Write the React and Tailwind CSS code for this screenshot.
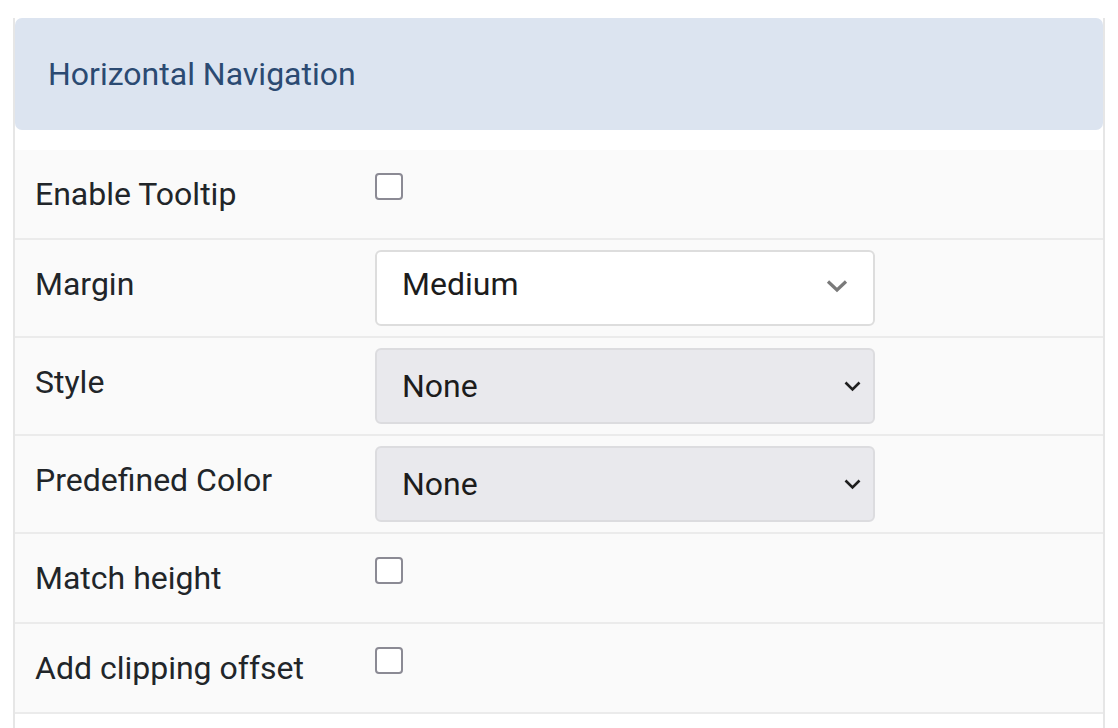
import React from 'react'

function Checkbox() {
    return <div className="mt-[23px] w-[28px] h-[27px] rounded-[4px] border-2 border-[#8b8a94] bg-white"></div>
}

function Chevron({ thick }) {
    if (thick) {
        return (
            <svg width="22" height="14" viewBox="0 0 22 14" className="mr-[25px] mb-[4px]">
                <path d="M2 2.5 L11 11 L20 2.5" fill="none" stroke="#7a7a7a" strokeWidth="3.2" />
            </svg>
        )
    }
    return (
        <svg width="17" height="11" viewBox="0 0 17 11" className="mr-[12px]">
            <path d="M1.5 1.5 L8.5 8.5 L15.5 1.5" fill="none" stroke="#1f1f1f" strokeWidth="2.6" />
        </svg>
    )
}

function Select({ value, plain }) {
    return (
        <div className={"my-[10px] w-[500px] h-[76px] rounded-[6px] border-2 flex items-center justify-between pl-[25px] " + (plain ? "bg-white border-[#dddddd]" : "bg-[#e9e9ed] border-[#dcdcdf]")}>
            <span className={"text-[32px] leading-none text-[#1c1c1c] " + (plain ? "pb-[8px]" : "")}>{value}</span>
            <Chevron thick={plain} />
        </div>
    )
}

function Row({ label, children, h }) {
    return (
        <div className={"flex pl-[20px] bg-[#fafafa] border-b-2 border-[#ebebeb] " + h}>
            <div className="w-[340px] pt-[22px] text-[32px] leading-[45px] text-[#212529]">{label}</div>
            <div>{children}</div>
        </div>
    )
}

export default function App() {
    return (
        <div className="bg-white h-[728px] overflow-hidden" style={{ fontFamily: 'Roboto, "Noto Sans", sans-serif' }}>
            <div className="ml-[13px] w-[1092px] h-[728px] border-x-2 border-[#e6e6e6]">
                <div className="mt-[18px] h-[112px] rounded-[7px] bg-[#dce4f0] flex items-center px-[33px]">
                    <span className="text-[32px] text-[#2b4a72]">Horizontal Navigation</span>
                </div>
                <div className="mt-[20px]">
                    <Row label="Enable Tooltip" h="h-[90px]"><Checkbox /></Row>
                    <Row label="Margin" h="h-[98px]"><Select value="Medium" plain /></Row>
                    <Row label="Style" h="h-[98px]"><Select value="None" /></Row>
                    <Row label="Predefined Color" h="h-[98px]"><Select value="None" /></Row>
                    <Row label="Match height" h="h-[90px]"><Checkbox /></Row>
                    <Row label="Add clipping offset" h="h-[90px]"><Checkbox /></Row>
                </div>
            </div>
        </div>
    )
}
